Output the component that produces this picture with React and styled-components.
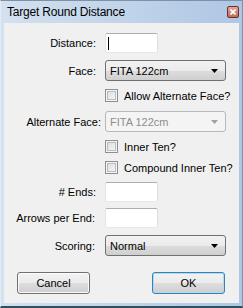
import React from "react";
import styled, { createGlobalStyle } from "styled-components";

const Global = createGlobalStyle`
  html, body { margin: 0; padding: 0; background: #fff; }
  body { font-family: "Liberation Sans", Arial, sans-serif; }
  * { box-sizing: border-box; }
`;

const Window = styled.div`
  width: 243px;
  height: 308px;
  display: flex;
  flex-direction: column;
  background: linear-gradient(to right, #d3e1f0, #aec7e4);
  border-top: 1px solid #7f91a5;
  border-left: 1px solid #e2eaf3;
  border-right: 1px solid #7f91a5;
  border-bottom: 2px solid #30505e;
`;

const TitleBar = styled.div`
  height: 22px;
  flex: none;
  display: flex;
  align-items: center;
  justify-content: space-between;
  padding: 0 3px 0 6px;
`;

const TitleText = styled.span`
  font-size: 12px;
  color: #000;
  letter-spacing: -0.2px;
`;

const CloseBtn = styled.div`
  width: 12px;
  height: 12px;
  margin-top: -1px;
  border: 1px solid #6e2f2a;
  border-radius: 2px;
  background: linear-gradient(#e2a69b, #c4675b);
  display: flex;
  align-items: center;
  justify-content: center;
`;

const Client = styled.div`
  flex: 1;
  margin: 0 3px 3px 3px;
  background: #f0f0f0;
  display: flex;
  flex-direction: column;
`;

const Row = styled.div`
  display: grid;
  grid-template-columns: 101px auto;
  align-items: center;
  margin-top: ${(p) => p.$mt}px;
  height: ${(p) => p.$h}px;
`;

const Label = styled.span`
  text-align: right;
  padding-right: ${(p) => (p.$pr ?? 9)}px;
  font-size: 11px;
  color: #000;
  white-space: nowrap;
`;

const TextBox = styled.div`
  width: 53px;
  height: 20px;
  background: #fff;
  border: 1px solid;
  border-color: #abadb3 #dbdfe6 #e3e9ef #e2e3ea;
  border-radius: 2px;
  display: flex;
  align-items: center;
  padding-left: 2px;
`;

const Caret = styled.span`
  width: 1px;
  height: 13px;
  background: #000;
`;

const Combo = styled.div`
  width: 121px;
  height: 21px;
  border: 1px solid ${(p) => (p.$disabled ? "#b5b9bd" : "#707070")};
  border-radius: 3px;
  background: ${(p) =>
    p.$disabled
      ? "#f4f4f4"
      : "linear-gradient(#f2f2f2 0%, #ebebeb 50%, #dddddd 51%, #cfcfcf 100%)"};
  color: ${(p) => (p.$disabled ? "#8d8d8d" : "#000")};
  font-size: 11px;
  display: flex;
  align-items: center;
  justify-content: space-between;
  padding: 0 7px 0 4px;
`;

const CheckWrap = styled.div`
  display: flex;
  align-items: center;
  gap: 6px;
  font-size: 11px;
  white-space: nowrap;
`;

const Box = styled.span`
  width: 13px;
  height: 13px;
  flex: none;
  border: 1px solid #8f8f8f;
  background: linear-gradient(135deg, #d5d8dc, #fbfbfb);
  box-shadow: inset 0 0 0 1px #f4f4f4, inset 0 0 0 2px #b9bdc2;
`;

const ButtonRow = styled.div`
  display: flex;
  justify-content: space-between;
  margin-top: 16px;
  padding: 0 14px 0 13px;
`;

const Button = styled.div`
  width: 73px;
  height: 22px;
  border: 1px solid ${(p) => (p.$default ? "#3c7fb1" : "#707070")};
  border-radius: 3px;
  background: linear-gradient(#f2f2f2 0%, #ebebeb 50%, #dddddd 51%, #cfcfcf 100%);
  box-shadow: ${(p) =>
    p.$default ? "inset 0 0 0 1px #a9dcf6" : "inset 0 0 0 1px #fbfbfb"};
  font-size: 11px;
  display: flex;
  align-items: center;
  justify-content: center;
`;

const Arrow = ({ color }) => (
  <svg width="7" height="4" viewBox="0 0 7 4">
    <polygon points="0,0 7,0 3.5,4" fill={color} />
  </svg>
);

const Check = ({ mt, children }) => (
  <Row $mt={mt} $h={13}>
    <span />
    <CheckWrap>
      <Box />
      {children}
    </CheckWrap>
  </Row>
);

export default function App() {
  return (
    <>
      <Global />
      <Window>
        <TitleBar>
          <TitleText>Target Round Distance</TitleText>
          <CloseBtn>
            <svg width="6" height="6" viewBox="0 0 6 6">
              <path d="M0.5 0.5 L5.5 5.5 M5.5 0.5 L0.5 5.5" stroke="#fff" strokeWidth="1.6" />
            </svg>
          </CloseBtn>
        </TitleBar>
        <Client>
          <Row $mt={10} $h={20}>
            <Label>Distance:</Label>
            <TextBox>
              <Caret />
            </TextBox>
          </Row>
          <Row $mt={7} $h={21}>
            <Label>Face:</Label>
            <Combo>
              FITA 122cm
              <Arrow color="#000" />
            </Combo>
          </Row>
          <Check mt={8}>Allow Alternate Face?</Check>
          <Row $mt={9} $h={21}>
            <Label $pr={4}>Alternate Face:</Label>
            <Combo $disabled>
              FITA 122cm
              <Arrow color="#a0a0a0" />
            </Combo>
          </Row>
          <Check mt={8}>Inner Ten?</Check>
          <Check mt={8}>Compound Inner Ten?</Check>
          <Row $mt={8} $h={20}>
            <Label>#&nbsp;Ends:</Label>
            <TextBox />
          </Row>
          <Row $mt={6} $h={20}>
            <Label $pr={10}>Arrows per End:</Label>
            <TextBox />
          </Row>
          <Row $mt={7} $h={21}>
            <Label $pr={10}>Scoring:</Label>
            <Combo>
              Normal
              <Arrow color="#000" />
            </Combo>
          </Row>
          <ButtonRow>
            <Button>Cancel</Button>
            <Button $default>OK</Button>
          </ButtonRow>
        </Client>
      </Window>
    </>
  );
}
